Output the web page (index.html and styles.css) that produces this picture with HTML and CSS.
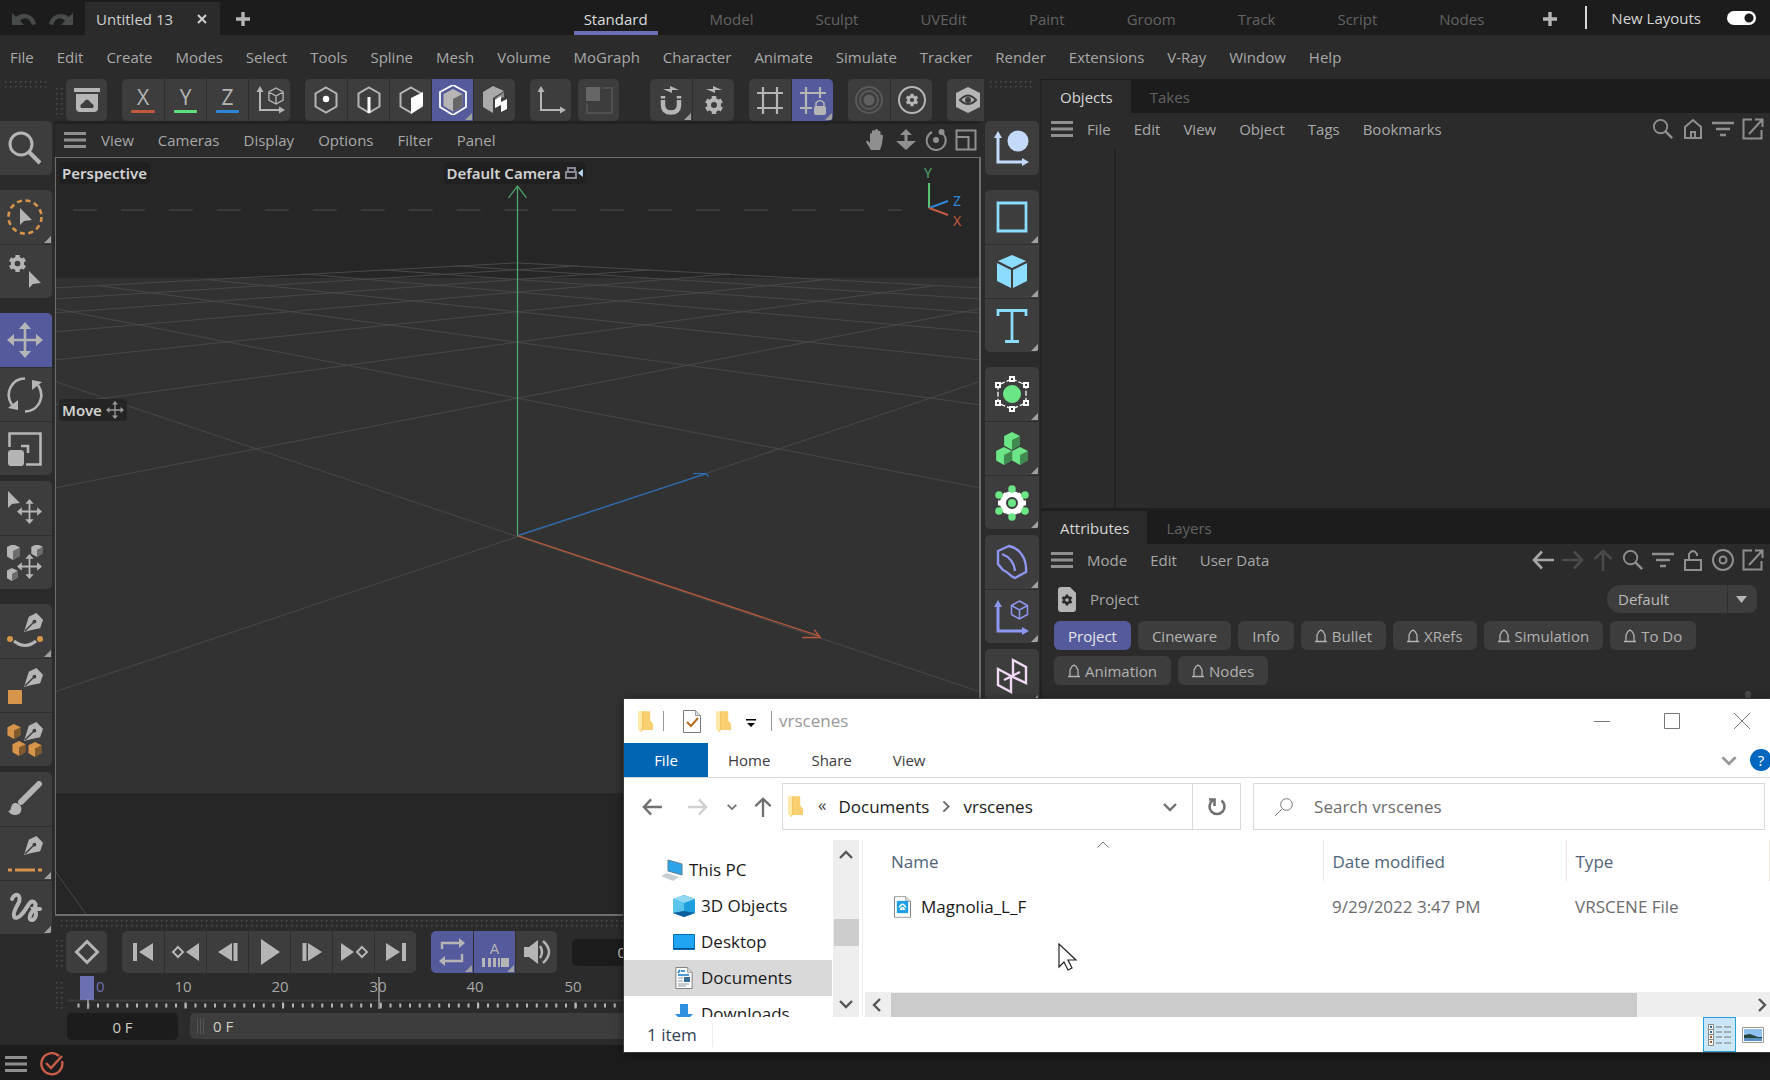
FILE: index.html
```html
<!DOCTYPE html>
<html lang="en">

<head>
    <meta charset="UTF-8">
    <meta name="viewport" content="width=device-width, initial-scale=1.0">
    <title>Untitled 13</title>
    <link rel="stylesheet" href="styles.css">
</head>

<body>
    <!-- icon sprite -->
    <svg class="sprite" aria-hidden="true">
        <symbol id="undo" viewBox="0 0 26 14"><path d="M1 1v12h12L9 9c4-5 10-3 12 4l4-1C23 2 12-1 5 5z" fill="currentColor" /></symbol>
        <symbol id="plus" viewBox="0 0 14 14"><path d="M7 0v14M0 7h14" stroke="currentColor" stroke-width="3.4" /></symbol>
        <symbol id="cross" viewBox="0 0 10 10"><path d="M1 1l8 8M9 1l-8 8" stroke="currentColor" stroke-width="2" /></symbol>
        <symbol id="burger" viewBox="0 0 22 16"><path d="M0 1.500h22M0 8h22M0 14.500h22" stroke="currentColor" stroke-width="3" /></symbol>
        <symbol id="search" viewBox="0 0 36 36"><g fill="none" stroke="currentColor"><circle cx="14" cy="14" r="11" stroke-width="3" /><path d="M22 22l11 11" stroke-width="4" /></g></symbol>
        <symbol id="cursor" viewBox="0 0 12 17"><path d="M0 0v17l4-4 8-1z" fill="currentColor" /></symbol>
        <symbol id="gear" viewBox="0 0 20 20"><circle cx="10" cy="10" r="5" fill="none" stroke="currentColor" stroke-width="4" /><path d="M10 1v3M10 16v3M2.200 5.500l2.600 1.500M15.200 13l2.600 1.500M2.200 14.500l2.600-1.500M15.200 7l2.600-1.500" stroke="currentColor" stroke-width="4.500" /></symbol>
        <symbol id="arrows" viewBox="0 0 36 36"><path d="M18 5v26M5 18h26" stroke="currentColor" stroke-width="2.600" /><path d="M18 0l6 7H12zM18 36l6-7H12zM0 18l7-6v12zM36 18l-7-6v12z" fill="currentColor" /></symbol>
        <symbol id="axes" viewBox="0 0 30 30"><path d="M5 5v20h20" fill="none" stroke="currentColor" stroke-width="2" /><path d="M5 1l3.500 6h-7zM30 25l-6-3.500v7z" fill="currentColor" /></symbol>
        <symbol id="wirecube" viewBox="0 0 18 20"><path d="M9 1l8 4.500v9L9 19l-8-4.500v-9zM1 5.500l8 4.500 8-4.500M9 10v9" fill="none" stroke="currentColor" stroke-width="1.500" /></symbol>
        <symbol id="hex" viewBox="0 0 24 28"><path d="M12 1.500l10.500 6v13L12 26.500l-10.500-6v-13z" fill="none" stroke="currentColor" stroke-width="2" /></symbol>
        <symbol id="pen" viewBox="0 0 20 20"><path d="M0 20L5 4l8-4 7 7-3 9-9 2z" fill="currentColor" /><path d="M1 19L10 10" stroke="#3d3d3d" stroke-width="1.500" /><circle cx="11" cy="9" r="2" fill="#3d3d3d" /></symbol>
        <symbol id="solidcube" viewBox="0 0 14 16"><path d="M7 0l7 3.500v8.500L7 16l-7-4V3.500z" fill="currentColor" /><path d="M7 7l7-3.500V12l-7 4z" fill="#000" opacity=".4" /></symbol>
        <symbol id="home" viewBox="0 0 20 22"><path d="M2 20V9l8-7 8 7v11zM8 20v-6h4v6" fill="none" stroke="currentColor" stroke-width="2" /></symbol>
        <symbol id="bell" viewBox="0 0 12 14"><path d="M2 12V6l2-3.500L6 1l2 1.500L10 6v6M0 12.500h12" fill="none" stroke="currentColor" stroke-width="1.300" /></symbol>
        <symbol id="filter" viewBox="0 0 22 18"><path d="M0 3h22M4 9h14M8 15h6" stroke="currentColor" stroke-width="2.600" /></symbol>
        <symbol id="open" viewBox="0 0 22 22"><path d="M10 1.500H1.500v19h18V12M13 1.500h7.500V9M20 2L7 16" fill="none" stroke="currentColor" stroke-width="2" /></symbol>
        <symbol id="arrow" viewBox="0 0 22 20"><path d="M22 10H2M10 1.500L2 10l8 8.500" fill="none" stroke="currentColor" stroke-width="2.600" /></symbol>
        <symbol id="chev" viewBox="0 0 14 10"><path d="M1 2l6 6 6-6" fill="none" stroke="currentColor" stroke-width="2.400" /></symbol>
        <symbol id="folder" viewBox="0 0 16 24"><path d="M0 1h6v20l-3 2-3-3z" fill="#ffe9a6" /><path d="M5 1h8v10l3 3v7H5z" fill="#f8d06f" /><path d="M5 1v19l-2 3" fill="none" stroke="#f0bf57" /></symbol>
        <symbol id="page" viewBox="0 0 18 23"><path d="M.500.500h12l5 5v17H.500z" fill="#fff" stroke="#7b7b7b" /><path d="M12.500.500v5h5" fill="#ddd" stroke="#9b9b9b" /></symbol>
    </svg>

    <header class="titlebar">
        <button class="hist" aria-label="Undo"><svg><use href="#undo" /></svg></button>
        <button class="hist redo" aria-label="Redo"><svg><use href="#undo" /></svg></button>
        <div class="doc-tab">
            <span>Untitled 13</span>
            <button aria-label="Close document"><svg width="10" height="10"><use href="#cross" /></svg></button>
        </div>
        <button class="add" aria-label="New document"><svg width="14" height="14"><use href="#plus" /></svg></button>
        <nav class="layouts">
            <button class="on">Standard</button>
            <button>Model</button>
            <button>Sculpt</button>
            <button>UVEdit</button>
            <button>Paint</button>
            <button>Groom</button>
            <button>Track</button>
            <button>Script</button>
            <button>Nodes</button>
        </nav>
        <button class="add-layout" aria-label="Add layout"><svg width="14" height="14"><use href="#plus" /></svg></button>
        <label class="switch" for="newLayouts">New Layouts <input type="checkbox" id="newLayouts" checked></label>
    </header>

    <nav class="menubar">
        <button>File</button>
        <button>Edit</button>
        <button>Create</button>
        <button>Modes</button>
        <button>Select</button>
        <button>Tools</button>
        <button>Spline</button>
        <button>Mesh</button>
        <button>Volume</button>
        <button>MoGraph</button>
        <button>Character</button>
        <button>Animate</button>
        <button>Simulate</button>
        <button>Tracker</button>
        <button>Render</button>
        <button>Extensions</button>
        <button>V-Ray</button>
        <button>Window</button>
        <button>Help</button>
    </nav>

    <main class="workspace">
        <!-- left tools -->
        <aside class="palette left">
            <div class="grip"></div>
            <div class="group">
                <button aria-label="Search"><svg><use href="#search" /></svg></button>
            </div>
            <div class="group space">
                <button class="more" aria-label="Live selection"><svg viewBox="0 0 36 36"><circle cx="18" cy="18" r="16.500" fill="none" stroke="#d6954a" stroke-width="2.600" stroke-dasharray="5 3.640" /><use href="#cursor" x="13" y="9" width="12" height="17" /></svg></button>
                <button aria-label="Selection settings"><svg viewBox="0 0 36 36"><use href="#gear" x="1" y="0" width="19" height="19" /><use href="#cursor" x="22" y="17" width="12" height="17" /></svg></button>
            </div>
            <div class="group space">
                <button class="on" aria-label="Move"><svg><use href="#arrows" /></svg></button>
                <button aria-label="Rotate"><svg viewBox="0 0 36 36"><path d="M18 1.500C5 1.500-3 16 5 28M18 34.500c13 0 21-14.500 13-26.500" fill="none" stroke="currentColor" stroke-width="2.600" /><path d="M1 31l10 2V23zM35 5L25 3v10z" fill="currentColor" /></svg></button>
                <button aria-label="Scale"><svg viewBox="0 0 36 36"><path d="M2.500 16V2.500h31v31H19M14 15h7v7" fill="none" stroke="currentColor" stroke-width="2.600" /><rect x="1" y="19" width="16" height="16" rx="3" fill="currentColor" /></svg></button>
            </div>
            <div class="group near">
                <button aria-label="Place"><svg viewBox="0 0 36 36"><use href="#cursor" x="1" y="1" width="12" height="17" /><use href="#arrows" x="10" y="9" width="25" height="25" /></svg></button>
                <button aria-label="Scatter"><svg viewBox="0 0 36 36"><use href="#solidcube" x="-1" y="-1" width="14" height="16" /><use href="#solidcube" x="24" y="-1" width="12" height="13" /><use href="#solidcube" x="-1" y="23" width="12" height="13" /><use href="#arrows" x="10" y="9" width="25" height="25" /></svg></button>
            </div>
            <div class="group space">
                <button class="more" aria-label="Spline pen"><svg viewBox="0 0 36 36"><use href="#pen" x="17" y="0" width="19" height="19" /><path d="M7 28q11 9 22 0" fill="none" stroke="currentColor" stroke-width="3" /><circle cx="3" cy="26" r="3" fill="#d6954a" /><circle cx="33" cy="26" r="3" fill="#d6954a" /></svg></button>
                <button aria-label="Polygon pen"><svg viewBox="0 0 36 36"><use href="#pen" x="17" y="0" width="19" height="19" /><path d="M1 22h14v14H1z" fill="#d6954a" /></svg></button>
                <button aria-label="Volume pen"><svg viewBox="0 0 36 36"><use href="#pen" x="17" y="0" width="19" height="19" /><g color="#d6954a"><use href="#solidcube" x="0" y="2" width="14" height="15" /><use href="#solidcube" x="5" y="19" width="14" height="15" /><use href="#solidcube" x="21" y="20" width="14" height="15" /></g></svg></button>
            </div>
            <div class="group near">
                <button aria-label="Brush"><svg viewBox="0 0 36 36"><path d="M14 21L32 3" stroke="currentColor" stroke-width="6" stroke-linecap="round" /><path d="M1 30c5 0 1-8 8-8 6 1 7 8 3 11-4 2-8 1-11-3z" fill="currentColor" /></svg></button>
                <button class="more" aria-label="Line cut"><svg viewBox="0 0 36 36"><use href="#pen" x="17" y="0" width="19" height="19" /><path d="M1 34h4M8 34h20M31 34h4" stroke="#d6954a" stroke-width="3" /></svg></button>
                <button class="more" aria-label="Sketch"><svg viewBox="0 0 36 36"><path d="M5 9c3-8 11-4 6 5-8 14-3 16 2 12C21 19 22 9 27 12c6 5-7 11-4 17 3 4 9-4 4-10h6" fill="none" stroke="currentColor" stroke-width="4" stroke-linecap="round" /></svg></button>
            </div>
        </aside>

        <section class="center">
            <!-- top toolbar -->
            <div class="toolbar">
                <div class="vgrip"></div>
                <div class="group"><button aria-label="Asset browser"><svg viewBox="0 0 30 30"><path d="M2 3h26v4H2zM4 9h22v14q0 4-4 4H8q-4 0-4-4z" fill="currentColor" /><path d="M9 23h12q2-3-2-5-4-7-8 0-4 2-2 5z" fill="#3d3d3d" /></svg></button></div>
                <div class="group">
                    <button class="axis x">X</button>
                    <button class="axis y">Y</button>
                    <button class="axis z">Z</button>
                    <button aria-label="Coordinate system"><svg viewBox="0 0 30 30"><use href="#axes" width="30" height="30" /><use href="#wirecube" x="13" y="2" width="16" height="18" /></svg></button>
                </div>
                <div class="group">
                    <button aria-label="Points"><svg viewBox="0 0 30 30"><use href="#hex" x="3" y="1" width="24" height="28" /><circle cx="15" cy="14" r="3.200" fill="#fff" /></svg></button>
                    <button aria-label="Edges"><svg viewBox="0 0 30 30"><use href="#hex" x="3" y="1" width="24" height="28" /><path d="M15 12v16" stroke="#fff" stroke-width="3" /></svg></button>
                    <button aria-label="Polygons"><svg viewBox="0 0 30 30"><use href="#hex" x="3" y="1" width="24" height="28" /><path d="M15 13l12-6v14l-12 8z" fill="#fff" /></svg></button>
                    <button class="on more" aria-label="Model mode"><svg viewBox="0 0 30 30"><path d="M15 0l13 7v15l-13 8-13-8V7z" fill="none" stroke="#fff" stroke-width="1.800" /><path d="M15 4l9.500 5v12L15 26.500 5.500 21V9z" fill="#b5b5b5" /><path d="M15 14l9.500-5v12L15 26.500z" fill="#666" /></svg></button>
                    <button aria-label="Texture mode"><svg viewBox="0 0 30 30"><path d="M13 1l11 5-11 7v15L3 22V7z" fill="#aaa" /><path d="M15 13l9-6v5l-9 5z" fill="#888" /><path d="M15 15l6-4v6l6-3v10l-6 3v-7l-6 3z" fill="#fff" /></svg></button>
                </div>
                <div class="group"><button aria-label="Axis"><svg><use href="#axes" /></svg></button></div>
                <div class="group near"><button aria-label="Solo"><svg viewBox="0 0 30 30"><path d="M2 2h14v14H2z" fill="#666" /><path d="M19 3h9v25H3v-9" fill="none" stroke="#505050" stroke-width="2" /></svg></button></div>
                <div class="group wide">
                    <button class="more" aria-label="Snap"><svg viewBox="0 0 30 30"><path d="M7 4h7V1l9 4h-7v3z" fill="currentColor" /><path d="M7 15v5q0 7.500 8 7.500t8-7.500v-5" fill="none" stroke="currentColor" stroke-width="4.500" /><path d="M4.700 11h4.600v2.500H4.700zM20.700 11h4.600v2.500h-4.600z" fill="currentColor" /></svg></button>
                    <button aria-label="Snap settings"><svg viewBox="0 0 30 30"><path d="M7 4h7V1l9 4h-7v3z" fill="currentColor" /><use href="#gear" x="5" y="10" width="20" height="20" /></svg></button>
                </div>
                <div class="group">
                    <button aria-label="Workplane"><svg viewBox="0 0 30 30"><path d="M8 2v27M22 2v27M2 8h26M2 23h26" stroke="currentColor" stroke-width="2.200" /></svg></button>
                    <button class="on more" aria-label="Lock workplane"><svg viewBox="0 0 30 30"><path d="M8 2v27M22 2v11M2 8h26M2 23h12" stroke="currentColor" stroke-width="2.200" /><rect x="16" y="21" width="12" height="9" rx="2" fill="currentColor" /><path d="M18 21v-3q4-5 8 0v3" fill="none" stroke="currentColor" stroke-width="1.500" /></svg></button>
                </div>
                <div class="group">
                    <button aria-label="Soft selection"><svg viewBox="0 0 30 30"><g fill="none" stroke="#5a5a5a" stroke-width="1.800"><circle cx="15" cy="15" r="13" /><circle cx="15" cy="15" r="9" /></g><circle cx="15" cy="15" r="5.500" fill="#606060" /></svg></button>
                    <button aria-label="Soft selection settings"><svg viewBox="0 0 30 30"><circle cx="15" cy="15" r="13" fill="none" stroke="currentColor" stroke-width="2" /><use href="#gear" x="8" y="8" width="14" height="14" /></svg></button>
                </div>
                <div class="group"><button aria-label="Viewport render"><svg viewBox="0 0 30 30"><path d="M15 2l12 6v14l-12 6-12-6V8z" fill="currentColor" /><path d="M7 15q8-9 16 0-8 8-16 0z" fill="none" stroke="#3d3d3d" stroke-width="2" /><circle cx="15" cy="15" r="3" fill="#3d3d3d" /></svg></button></div>
            </div>

            <div class="view-head">
                <svg class="burger"><use href="#burger" /></svg>
                <button>View</button>
                <button>Cameras</button>
                <button>Display</button>
                <button>Options</button>
                <button>Filter</button>
                <button>Panel</button>
                <div class="view-nav">
                    <svg viewBox="0 0 22 22"><path d="M6 21l-5-8q0-2 2-1l2 2V5q1-2 2 0V2q1.500-2 3 0V1q1.500-2 3 0v1q2-1 2.500 1v3q2-1.500 2.500 1l-1 8-2 6z" fill="currentColor" /></svg>
                    <svg viewBox="0 0 22 22"><path d="M11 0l6 6h-4.500v6H21l-10 9-10-9h8.500V6H5z" fill="currentColor" /></svg>
                    <svg viewBox="0 0 22 22"><path d="M7 3a9.500 9.500 0 1 0 10 1" fill="none" stroke="currentColor" stroke-width="2" /><circle cx="16.500" cy="3" r="3" fill="currentColor" /><circle cx="11" cy="11" r="3" fill="currentColor" /></svg>
                    <svg viewBox="0 0 22 22"><path d="M1.500 1.500h19v19h-19zM1.500 8h12v12" fill="none" stroke="currentColor" stroke-width="2" /></svg>
                </div>
            </div>

            <div class="viewport">
                <svg class="scene" viewBox="56 158 924 757" preserveAspectRatio="xMidYMin slice">
                    <path d="M56 278h924v516H56z" fill="#323232" />
                    <path d="M73 210h830" stroke="#3a3a3a" stroke-width="2" stroke-dasharray="24 24" />
                    <g fill="none" stroke="#484848">
                        <path d="M56 382L980 692M56 309L980 488M100 286L980 405M210 280L980 360M303 274L980 332M384 270L980 313M455 266L980 299M517 263L980 288" />
                        <path d="M980 382L56 692M980 309L56 488M934 286L56 405M824 280L56 360M731 274L56 332M650 270L56 313M579 266L56 299M517 263L56 288" />
                        <path d="M56 873l30 42" />
                    </g>
                    <path d="M518 536V186M509 198l9-12 9 12" fill="none" stroke="#4fa56a" stroke-width="1.300" />
                    <path d="M518 536l189-62M694 474l13 0 2 3" fill="none" stroke="#2c6db5" stroke-width="1.300" />
                    <path d="M518 536l303 101M803 638h18l-6-8" fill="none" stroke="#b8583f" stroke-width="1.300" />
                    <g fill="none" stroke-width="2"><path d="M930 208v-25" stroke="#5cc878" /><path d="M930 208l19-7" stroke="#2f86d8" /><path d="M930 208l19 7" stroke="#c25a40" /></g>
                    <g class="gizmo"><text x="925" y="178" fill="#4fa56a">Y</text><text x="954" y="206" fill="#2f86d8">Z</text><text x="954" y="226" fill="#c25a40">X</text></g>
                </svg>
                <span class="hud persp">Perspective</span>
                <span class="hud cam">Default Camera <svg width="18" height="14" viewBox="0 0 18 14"><path d="M1 6h10v6H1zM3 6V2h7v4" fill="none" stroke="#8a8a96" stroke-width="2" /><path d="M18 3v8l-5-4z" fill="#b7d4ea" /></svg></span>
                <span class="hud tool">Move <svg width="18" height="18"><use href="#arrows" /></svg></span>
            </div>

            <!-- timeline -->
            <div class="timeline">
                <div class="tgrip"></div>
                <div class="play">
                    <div class="vgrip"></div>
                    <div class="group"><button aria-label="Record key"><svg viewBox="0 0 30 30"><path d="M15 4.500L25.500 15 15 25.500 4.500 15z" fill="none" stroke="currentColor" stroke-width="3" /></svg></button></div>
                    <div class="group">
                        <button aria-label="Go to start"><svg viewBox="0 0 30 30"><path d="M5 6h4v18H5zM25 6v18L11 15z" fill="currentColor" /></svg></button>
                        <button aria-label="Previous key"><svg viewBox="0 0 30 30"><path d="M7 10l5 5-5 5-5-5z" fill="none" stroke="currentColor" stroke-width="2" /><path d="M28 6v18L15 15z" fill="currentColor" /></svg></button>
                        <button aria-label="Previous frame"><svg viewBox="0 0 30 30"><path d="M19 6v18L5 15zM20.500 6h4v18h-4z" fill="currentColor" /></svg></button>
                        <button aria-label="Play"><svg viewBox="0 0 30 30"><path d="M6 2l19 13L6 28z" fill="currentColor" /></svg></button>
                        <button aria-label="Next frame"><svg viewBox="0 0 30 30"><path d="M11 6v18l14-9zM5.500 6h4v18h-4z" fill="currentColor" /></svg></button>
                        <button aria-label="Next key"><svg viewBox="0 0 30 30"><path d="M23 10l5 5-5 5-5-5z" fill="none" stroke="currentColor" stroke-width="2" /><path d="M2 6v18l13-9z" fill="currentColor" /></svg></button>
                        <button aria-label="Go to end"><svg viewBox="0 0 30 30"><path d="M21 6h4v18h-4zM5 6v18l14-9z" fill="currentColor" /></svg></button>
                    </div>
                    <div class="group">
                        <button class="on more" aria-label="Loop"><svg viewBox="0 0 30 30"><path d="M5 12V6h18M25 17v7H7" fill="none" stroke="currentColor" stroke-width="2.400" /><path d="M22 1l6 5-6 5zM8 19l-6 5 6 5z" fill="currentColor" /></svg></button>
                        <button class="on more autokey"><span>A</span><svg viewBox="0 0 30 9"><path d="M2 0h3v9H2zM8 0h3v9H8zM13 0h3v9h-3zM18 0h2v9h-2zM21 0h8v9h-8z" fill="currentColor" /></svg></button>
                        <button aria-label="Sound"><svg viewBox="0 0 30 30"><path d="M2 10h5l9-7v24l-9-7H2z" fill="currentColor" /><path d="M18 9q4 6 0 12M21 4q12 11 0 22" fill="none" stroke="currentColor" stroke-width="2.500" /></svg></button>
                    </div>
                    <input class="frame" type="text" value="0 F" aria-label="Current frame">
                </div>
                <div class="ruler-row">
                    <div class="vgrip"></div>
                    <svg class="ruler">
                        <path d="M2 27.500h1000" stroke="#3d3d3d" stroke-width="2" />
                        <path d="M11.500 32.500h1000" stroke="#b5b5b5" stroke-width="4" stroke-dasharray="2 7.750" />
                        <path d="M21 32.500h1000" stroke="#b5b5b5" stroke-width="6" stroke-dasharray="2 95.500" />
                        <path d="M14 3h14v24H14z" fill="#6c70b2" />
                        <path d="M22 26v10M313 4v32" stroke="#9a9a9a" stroke-width="1.500" />
                        <g>
                            <text x="30" y="19" class="now">0</text>
                            <text x="117" y="19" text-anchor="middle">10</text>
                            <text x="214" y="19" text-anchor="middle">20</text>
                            <text x="312" y="19" text-anchor="middle">30</text>
                            <text x="409" y="19" text-anchor="middle">40</text>
                            <text x="507" y="19" text-anchor="middle">50</text>
                        </g>
                    </svg>
                </div>
                <div class="range">
                    <input class="frame" type="text" value="0 F" aria-label="Start frame">
                    <div class="range-bar"><i></i>0 F</div>
                </div>
            </div>
        </section>

        <!-- object palette -->
        <aside class="palette right">
            <div class="grip"></div>
            <div class="group">
                <button aria-label="Null"><svg viewBox="0 0 36 36" color="#c4dafa"><path d="M4 8v24h24" fill="none" stroke="currentColor" stroke-width="3" /><path d="M4 1l4 7H0zM35 32l-7-4v8z" fill="currentColor" /><circle cx="24" cy="11" r="10.500" fill="currentColor" /></svg></button>
            </div>
            <div class="group space">
                <button class="more" aria-label="Rectangle"><svg viewBox="0 0 36 36"><path d="M4 4h28v28H4z" fill="none" stroke="#8cdcff" stroke-width="2.800" /></svg></button>
                <button class="more" aria-label="Cube"><svg viewBox="0 0 36 36" fill="#8cdcff"><path d="M18 1l14 6-14 7L4 7zM3 9l14 7v18L3 27zM33 9l-14 7v18l14-7z" /></svg></button>
                <button class="more" aria-label="Text"><svg viewBox="0 0 36 36"><path d="M4 8V2.500h28V8M18 3v30M11 33.500h14" fill="none" stroke="#8cdcff" stroke-width="2.800" /></svg></button>
            </div>
            <div class="group space">
                <button class="more" aria-label="Subdivision surface"><svg viewBox="0 0 36 36"><circle cx="18" cy="18" r="9" fill="#6be585" /><path d="M18 3l14 6v18l-14 6-14-6V9z" fill="none" stroke="#fff" stroke-width="1.300" stroke-dasharray="5 2" /><g fill="#3d3d3d" stroke="#fff" stroke-width="2"><path d="M16 1h4v4h-4zM16 31h4v4h-4zM2 7h4v4H2zM30 7h4v4h-4zM2 25h4v4H2zM30 25h4v4h-4z" /></g></svg></button>
                <button class="more" aria-label="Cloner"><svg viewBox="0 0 36 36" color="#6be585"><use href="#solidcube" x="10" y="1" width="16" height="18" /><use href="#solidcube" x="2" y="16" width="16" height="18" /><use href="#solidcube" x="18" y="16" width="16" height="18" /></svg></button>
                <button class="more" aria-label="Effector"><svg viewBox="0 0 36 36"><g fill="none" stroke="#fff"><circle cx="18" cy="18" r="9" stroke-width="6" /><path d="M9 9l3 3M27 9l-3 3M9 27l3-3M27 27l-3-3M4 18h4M32 18h-4" stroke-width="5" /></g><g fill="#6be585"><circle cx="18" cy="18" r="4" /><circle cx="18" cy="4" r="3.800" /><circle cx="18" cy="32" r="3.800" /><circle cx="5" cy="10" r="3.800" /><circle cx="31" cy="10" r="3.800" /><circle cx="5" cy="26" r="3.800" /><circle cx="31" cy="26" r="3.800" /></g></svg></button>
            </div>
            <div class="group near">
                <button class="more" aria-label="Bend"><svg viewBox="0 0 36 36" fill="none" stroke="#8e97f0" stroke-width="2.400"><path d="M4 7l11-5c11 2 18 13 17 26l-11 6c-4-1-5-5-12-8l-5-6z" /><path d="M8 10c8 3 12 8 13 17" /></svg></button>
                <button class="more" aria-label="Field"><svg viewBox="0 0 36 36" color="#8e97f0"><path d="M4 8v24h24" fill="none" stroke="currentColor" stroke-width="3" /><path d="M4 1l4 7H0zM35 32l-7-4v8z" fill="currentColor" /><use href="#wirecube" x="16" y="1" width="19" height="20" /></svg></button>
            </div>
            <div class="group near">
                <button class="more" aria-label="Symmetry"><svg viewBox="0 0 36 36" fill="none" stroke="#f0d8f4" stroke-width="2.400"><path d="M4 11l13 7v16L4 27zM19 2l13 7v16l-13-6zM10 22l16-8" /></svg></button>
            </div>
        </aside>

        <section class="panels">
            <div class="panel objects">
                <div class="tabs">
                    <button class="on">Objects</button>
                    <button>Takes</button>
                </div>
                <div class="panel-menu">
                    <svg class="burger"><use href="#burger" /></svg>
                    <button>File</button>
                    <button>Edit</button>
                    <button>View</button>
                    <button>Object</button>
                    <button>Tags</button>
                    <button>Bookmarks</button>
                    <div class="panel-icons">
                        <svg><use href="#search" /></svg>
                        <svg><use href="#home" /></svg>
                        <svg><use href="#filter" /></svg>
                        <svg><use href="#open" /></svg>
                    </div>
                </div>
                <div class="tree"></div>
            </div>

            <div class="panel attributes">
                <div class="tabs">
                    <button class="on">Attributes</button>
                    <button>Layers</button>
                </div>
                <div class="panel-menu">
                    <svg class="burger"><use href="#burger" /></svg>
                    <button>Mode</button>
                    <button>Edit</button>
                    <button>User Data</button>
                    <div class="panel-icons">
                        <svg class="lit"><use href="#arrow" /></svg>
                        <svg class="dim flip"><use href="#arrow" /></svg>
                        <svg class="dim up"><use href="#arrow" /></svg>
                        <svg><use href="#search" /></svg>
                        <svg><use href="#filter" /></svg>
                        <svg viewBox="0 0 22 22"><path d="M3 11h16v10H3zM7 11V5q4-6 8 0v2" fill="none" stroke="currentColor" stroke-width="2" /></svg>
                        <svg viewBox="0 0 22 22"><g fill="none" stroke="currentColor" stroke-width="2"><circle cx="11" cy="11" r="10" /><circle cx="11" cy="11" r="3.500" /></g></svg>
                        <svg><use href="#open" /></svg>
                    </div>
                </div>
                <div class="project">
                    <svg width="18" height="25" viewBox="0 0 18 25"><path d="M3 0h9l6 6v16q0 3-3 3H3q-3 0-3-3V3q0-3 3-3z" fill="#b5b5b5" /><g color="#2b2b2b"><use href="#gear" x="3" y="7" width="12" height="12" /></g></svg>
                    <label for="preset">Project</label>
                    <div class="drop">
                        <select id="preset">
                            <option>Default</option>
                        </select>
                    </div>
                </div>
                <div class="chips">
                    <button class="on">Project</button>
                    <button>Cineware</button>
                    <button>Info</button>
                    <button><svg><use href="#bell" /></svg>Bullet</button>
                    <button><svg><use href="#bell" /></svg>XRefs</button>
                    <button><svg><use href="#bell" /></svg>Simulation</button>
                    <button><svg><use href="#bell" /></svg>To Do</button>
                    <button><svg><use href="#bell" /></svg>Animation</button>
                    <button><svg><use href="#bell" /></svg>Nodes</button>
                </div>
                <div class="thumb"></div>
            </div>
        </section>
    </main>

    <footer class="statusbar">
        <svg class="burger"><use href="#burger" /></svg>
        <svg width="24" height="24" viewBox="0 0 24 24"><path d="M19 4a10.500 10.500 0 1 0 3 5M6 11l5 5L22 4" fill="none" stroke="#c85f48" stroke-width="2.400" /></svg>
    </footer>

    <!-- file explorer window -->
    <section class="explorer">
        <div class="ex-title">
            <svg class="folder"><use href="#folder" /></svg>
            <i></i>
            <svg class="check" viewBox="0 0 18 23"><use href="#page" width="18" height="23" /><path d="M4 12l4 4 7-8" fill="none" stroke="#b86a1c" stroke-width="2" /></svg>
            <svg class="folder"><use href="#folder" /></svg>
            <svg class="qa" viewBox="0 0 10 8"><path d="M0 0h10v1.500H0zM1 4h8L5 8z" /></svg>
            <i></i>
            <span>vrscenes</span>
            <div class="win-btns">
                <button aria-label="Minimize"><svg viewBox="0 0 16 16"><path d="M0 8.500h16" stroke="#777" /></svg></button>
                <button aria-label="Maximize"><svg viewBox="0 0 16 16"><path d="M.500.500h15v15H.500z" fill="none" stroke="#777" /></svg></button>
                <button aria-label="Close"><svg viewBox="0 0 16 16"><path d="M0 0l16 16M16 0L0 16" stroke="#777" /></svg></button>
            </div>
        </div>
        <div class="ribbon">
            <button class="file">File</button>
            <button>Home</button>
            <button>Share</button>
            <button>View</button>
            <svg class="expand"><use href="#chev" /></svg>
            <button class="help" aria-label="Help">?</button>
        </div>
        <div class="ex-nav">
            <button aria-label="Back"><svg class="arr"><use href="#arrow" /></svg></button>
            <button class="off" aria-label="Forward"><svg class="arr flip"><use href="#arrow" /></svg></button>
            <button class="recent" aria-label="Recent locations"><svg width="10" height="8"><use href="#chev" /></svg></button>
            <button aria-label="Up"><svg class="arr up"><use href="#arrow" /></svg></button>
            <div class="address">
                <svg class="folder"><use href="#folder" /></svg>
                <span class="laquo">«</span>
                <a href="#">Documents</a>
                <svg class="sep"><use href="#chev" /></svg>
                <a href="#">vrscenes</a>
                <svg class="drop-ico"><use href="#chev" /></svg>
                <button aria-label="Refresh"><svg width="20" height="20" viewBox="0 0 20 20"><path d="M14.500 3.500a7.500 7.500 0 1 1-9 0M2 2.500h5.500V9" fill="none" stroke="#707070" stroke-width="2.600" /></svg></button>
            </div>
            <div class="find">
                <svg viewBox="0 0 18 18"><circle cx="11.500" cy="6.500" r="5.800" fill="none" stroke="#777" /><path d="M7.500 10.500L0 18" stroke="#777" /></svg>
                <input type="text" placeholder="Search vrscenes" aria-label="Search vrscenes">
            </div>
        </div>
        <div class="ex-body">
            <ul class="places">
                <li class="root"><svg viewBox="0 0 22 22"><path d="M7 1l14 4v11L7 12z" fill="#2da3ea" stroke="#5b7f96" /><path d="M0 17l6-3 12 4-6 4z" fill="#c9ced3" /></svg>This PC</li>
                <li><svg viewBox="0 0 22 22"><path d="M0 4l11-4 11 4v14l-11 4-11-4z" fill="#1e9fdd" /><path d="M0 4l11-4 11 4-11 4z" fill="#8fd9f2" /><path d="M0 4l11 4v8L0 18z" fill="#5cc5ee" /><path d="M0 18l11-2 11 2-11 4z" fill="#0c5f9e" /></svg>3D Objects</li>
                <li><svg viewBox="0 0 22 22"><path d="M.500 3.500h21v15H.500z" fill="#1fa5f2" stroke="#0b6cb8" /><path d="M1 17.500h20" stroke="#0b4f8a" /></svg>Desktop</li>
                <li class="on"><svg viewBox="0 0 22 22"><use href="#page" x="2" y="0" width="18" height="22" /><path d="M5 6l2-3M8 4h4M5 8h11" stroke="#1679c8" stroke-width="1.500" /><path d="M5 11h5M5 14h5M5 17h11M5 19h8" stroke="#8c9aa5" /><path d="M11 10h6v5h-6z" fill="#3c6e9c" /></svg>Documents</li>
                <li><svg viewBox="0 0 22 22"><path d="M7 1h8v10h5l-9 9-9-9h5z" fill="#2f8fe0" /></svg>Downloads</li>
            </ul>
            <div class="vscroll">
                <svg class="rot"><use href="#chev" /></svg>
                <span></span>
                <svg><use href="#chev" /></svg>
            </div>
            <div class="files">
                <table>
                    <thead>
                        <tr>
                            <th class="c-name">Name<svg viewBox="0 0 12 7"><path d="M.500 6.500L6 1l5.500 5.500" fill="none" stroke="#777" /></svg></th>
                            <th class="c-date">Date modified</th>
                            <th>Type</th>
                        </tr>
                    </thead>
                    <tbody>
                        <tr>
                            <td class="name"><svg viewBox="0 0 18 23"><use href="#page" width="18" height="23" /><path d="M3 5h12v13H3z" fill="#1fa0ea" /><path d="M5.500 12q3.500-7 7 0M7 14q2-4 4 0z" fill="none" stroke="#fff" stroke-width="1.500" /></svg>Magnolia_L_F</td>
                            <td>9/29/2022 3:47 PM</td>
                            <td>VRSCENE File</td>
                        </tr>
                    </tbody>
                </table>
                <div class="hscroll">
                    <svg class="l"><use href="#chev" /></svg>
                    <span></span>
                    <svg class="r"><use href="#chev" /></svg>
                </div>
            </div>
        </div>
        <div class="ex-status">
            <span>1 item</span>
            <button class="details" aria-label="Details view"><svg width="24" height="22" viewBox="0 0 24 22"><path d="M.500.500h5v5h-5zM.500 5.500h5v5h-5zM.500 10.500h5v5h-5zM.500 15.500h5v6h-5z" fill="#fff" stroke="#888" /><path d="M8 3h6M16 3h7M8 8h6M16 8h7M8 13h6M16 13h7M8 19h6M16 19h7" stroke="#777" /><path d="M2 2h2v2H2zM2 7h2v2H2z" fill="#2c6ca0" /><path d="M2 12h2v2H2zM2 17h2v2H2z" fill="#b0562c" /></svg></button>
            <button class="thumbs" aria-label="Thumbnail view"><svg width="22" height="16" viewBox="0 0 22 16"><path d="M.500.500h21v15H.500z" fill="#fff" stroke="#999" /><path d="M2 2h18v12H2z" fill="#8fc0f0" /><path d="M2 8l6-1 8 3h4v1H2z" fill="#27443e" /><path d="M2 11h18v3H2z" fill="#5a8fc4" /></svg></button>
        </div>
    </section>

    <svg class="pointer" viewBox="0 0 19 28"><path d="M1 1v23l5-5 4 8 4-2-4-8h8z" fill="#fff" stroke="#222" stroke-width="1.200" /></svg>
</body>

</html>
```

FILE: styles.css
```css
* {
    box-sizing: border-box;
}

body {
    margin: 0;
    height: 100vh;
    display: flex;
    flex-direction: column;
    overflow: hidden;
    position: relative;
    background-color: #2b2b2b;
    color: #a8a8a8;
    font-family: "Open Sans", "Noto Sans", sans-serif;
    font-size: 15px;
    line-height: 20px;
}

button,
input,
select {
    font: inherit;
    color: inherit;
    background: none;
    border: 0;
    padding: 0;
    margin: 0;
}

svg {
    display: block;
    flex: none;
}

.sprite {
    position: absolute;
    width: 0;
    height: 0;
}

.burger {
    width: 22px;
    height: 16px;
    color: #8f8f8f;
}

/* title bar */
.titlebar {
    flex: none;
    height: 35px;
    display: flex;
    align-items: center;
    background-color: #1c1c1c;
    padding: 2px 14px 0 11px;
}

.hist svg {
    width: 26px;
    height: 14px;
    color: #474b49;
    margin-right: 11px;
}

.redo svg {
    transform: scaleX(-1);
}

.doc-tab {
    align-self: flex-end;
    height: 33px;
    width: 135px;
    display: flex;
    align-items: center;
    justify-content: space-between;
    padding: 0 13px 0 11px;
    background-color: #2b2b2b;
    color: #d0d0d0;
}

.add {
    margin-left: 16px;
    color: #b5b5b5;
}

.layouts {
    margin-left: auto;
    display: flex;
    gap: 42px;
    align-self: stretch;
}

.layouts button {
    padding: 0 10px;
    border-bottom: 4px solid transparent;
    border-top: 4px solid transparent;
    color: #636363;
}

.layouts .on {
    color: #dcdcdc;
    border-bottom-color: #6c6fb4;
}

.add-layout {
    margin: 0 28px 0 49px;
    color: #b5b5b5;
}

.switch {
    display: flex;
    align-items: center;
    gap: 26px;
    height: 23px;
    margin-bottom: 2px;
    padding-left: 24px;
    border-left: 2px solid #d8d8d8;
    color: #d6d6d6;
}

.switch input {
    appearance: none;
    width: 29px;
    height: 14px;
    border-radius: 7px;
    background: radial-gradient(circle at 22px 7px, #1c1c1c 4px, #fff 5px);
}

.menubar {
    flex: none;
    height: 44px;
    display: flex;
    align-items: center;
    gap: 23px;
    padding: 0 10px;
}

/* workspace */
.workspace {
    flex: 1;
    min-height: 0;
    display: grid;
    grid-template-columns: 54px minmax(0, 930fr) 56px minmax(0, 730fr);
    grid-template-rows: minmax(0, 1fr);
}

.grip,
.tgrip,
.vgrip {
    background-image: radial-gradient(#444 1px, transparent 1px);
    background-size: 5px 5px;
}

.palette {
    display: flex;
    flex-direction: column;
    overflow: hidden;
}

.palette .grip {
    flex: none;
    height: 10px;
    margin: 0 6px 32px 3px;
}

.group {
    flex: none;
    display: flex;
    background-color: #3d3d3d;
    border-radius: 5px;
    overflow: hidden;
    color: #b5b5b5;
}

.group button {
    position: relative;
    display: flex;
    align-items: center;
    justify-content: center;
}

.group .on {
    background-color: #555a9c;
}

/* small corner mark on buttons which hold a sub menu */
.more::after {
    content: "";
    position: absolute;
    right: 1px;
    bottom: 1px;
    width: 7px;
    height: 7px;
    background-color: #a0a0a0;
    clip-path: polygon(100% 0, 100% 100%, 0 100%);
}

.palette .group {
    flex-direction: column;
}

.palette .group.space {
    margin-top: 15px;
}

.palette .group.near {
    margin-top: 6px;
}

.palette button {
    height: 54px;
}

.palette button + button {
    border-top: 1px solid #2f2f2f;
}

.palette svg {
    width: 36px;
    height: 36px;
}

.left {
    padding-right: 2px;
}

.left button {
    padding-right: 2px;
}

.left .group {
    border-radius: 0 5px 5px 0;
}

.right {
    padding: 0 1px;
}

/* center column */
.center {
    display: flex;
    flex-direction: column;
    min-width: 0;
}

.toolbar {
    flex: none;
    height: 42px;
    display: flex;
    overflow: hidden;
}

.vgrip {
    flex: none;
    width: 10px;
    margin: 7px 2px 5px 0;
}

.toolbar .group,
.play .group {
    height: 42px;
    margin-right: 15px;
}

.toolbar .group.near {
    margin-left: -8px;
}

.toolbar .group.wide {
    margin-left: 16px;
}

.toolbar button,
.play button {
    width: 42px;
}

.toolbar button:only-child,
.play button:only-child {
    width: 41px;
}

.toolbar button + button,
.play button + button {
    border-left: 1px solid #2f2f2f;
}

.toolbar .group svg,
.play .group svg {
    width: 30px;
    height: 30px;
}

.toolbar .axis {
    flex-direction: column;
    justify-content: flex-start;
    padding-top: 8px;
    font-size: 21px;
}

.axis::before {
    content: "";
    position: absolute;
    left: 9px;
    right: 9px;
    bottom: 8px;
    height: 3px;
    border-radius: 1px;
}

.x::before {
    background-color: #c2583c;
}

.y::before {
    background-color: #5ee07c;
}

.z::before {
    background-color: #2f86d8;
}

.view-head {
    flex: none;
    height: 36px;
    display: flex;
    align-items: center;
    gap: 24px;
    margin-right: 4px;
    padding: 0 3px 2px 9px;
    border-top: 3px solid #222;
    border-left: 1px solid #222;
}

.view-head .burger {
    margin-right: -9px;
}

.view-nav {
    margin-left: auto;
    display: flex;
    gap: 8px;
    color: #8f8f8f;
}

.view-nav svg {
    width: 22px;
    height: 22px;
}

.viewport {
    flex: 1;
    min-height: 0;
    position: relative;
    margin: 0 3px 0 1px;
    border: 1px solid #6e6e6e;
    border-width: 1px 2px 2px 1px;
    background-color: #262626;
}

.scene {
    width: 100%;
    height: 100%;
}

.gizmo {
    font: 14px "Noto Sans", sans-serif;
}

.hud {
    position: absolute;
    display: flex;
    align-items: center;
    gap: 4px;
    padding: 0 3px;
    height: 22px;
    border-radius: 4px;
    background-color: rgba(30, 30, 30, 0.7);
    color: #d2d2d2;
    font-family: "Noto Sans", sans-serif;
    font-weight: 600;
}

.persp {
    left: 3px;
    top: 4px;
}

.cam {
    left: 50%;
    top: 4px;
    transform: translateX(-52%);
}

.tool {
    left: 3px;
    top: 241px;
}

.tool svg {
    color: #999;
}

/* timeline */
.timeline {
    flex: none;
    padding-bottom: 5px;
}

.tgrip {
    height: 10px;
    margin: 2px 0 3px 5px;
}

.play,
.ruler-row,
.range {
    display: flex;
    overflow: hidden;
}

.play {
    align-items: center;
}

.play .vgrip {
    height: 30px;
}

.play .autokey {
    flex-direction: column;
}

.play .autokey svg {
    height: 9px;
}

.ruler-row .vgrip {
    height: 30px;
    margin-bottom: 0;
}

.frame {
    width: 111px;
    height: 27px;
    border-radius: 5px;
    background-color: #1c1c1c;
    color: #d0cdc4;
    text-align: center;
}

.ruler {
    flex: 1;
    min-width: 0;
    height: 40px;
    fill: #a8a8a8;
}

.ruler .now {
    fill: #6c70b2;
}

.range {
    padding-left: 13px;
    gap: 12px;
}

.range-bar {
    flex: 1;
    display: flex;
    align-items: center;
    height: 26px;
    padding-left: 7px;
    gap: 8px;
    border-radius: 5px;
    background-color: #3d3d3d;
    color: #d0cdc4;
}

.range-bar i {
    width: 8px;
    height: 16px;
    background: repeating-linear-gradient(90deg, #555 0 1px, transparent 1px 3px);
}

/* right panels */
.panels {
    display: flex;
    flex-direction: column;
    min-width: 0;
    border-left: 2px solid #222;
}

.panel {
    min-height: 0;
    display: flex;
    flex-direction: column;
}

.objects {
    flex: 430;
}

.attributes {
    flex: 536;
    position: relative;
    border-top: 2px solid #1f1f1f;
}

.tabs {
    flex: none;
    height: 34px;
    display: flex;
    padding-top: 1px;
    background-color: #1c1c1c;
}

.tabs button {
    padding: 0 18px;
    margin-right: 1px;
    color: #636363;
}

.tabs .on {
    background-color: #2b2b2b;
    color: #d6d6d6;
}

.panel-menu {
    flex: none;
    height: 34px;
    display: flex;
    align-items: center;
    gap: 23px;
    padding: 0 6px 2px 9px;
}

.panel-menu .burger {
    margin-right: -9px;
}

.panel-icons {
    margin-left: auto;
    display: flex;
    gap: 8px;
    color: #8f8f8f;
}

.panel-icons svg {
    width: 22px;
    height: 22px;
}

.panel-icons .lit {
    color: #a8a8a8;
}

.panel-icons .dim {
    color: #4a4a4a;
}

.flip {
    transform: scaleX(-1);
}

.up {
    transform: rotate(90deg);
}

.tree {
    flex: 1;
    width: 74px;
    margin-top: 2px;
    border-right: 2px solid #222;
}

.project {
    display: flex;
    align-items: center;
    gap: 14px;
    height: 28px;
    margin: 7px 13px 8px 16px;
}

.drop {
    position: relative;
    margin-left: auto;
    width: 150px;
    height: 28px;
    border-radius: 14px 8px 8px 14px;
    background: linear-gradient(90deg, #3d3d3d 120px, #2f2f2f 120px 121px, #3d3d3d 121px);
}

.drop select {
    appearance: none;
    width: 100%;
    height: 28px;
    padding-left: 11px;
    color: #bcbcbc;
}

.drop::after {
    content: "";
    position: absolute;
    right: 10px;
    top: 11px;
    width: 11px;
    height: 7px;
    background-color: #b5b5b5;
    clip-path: polygon(0 0, 100% 0, 50% 100%);
    pointer-events: none;
}

.chips {
    display: flex;
    flex-wrap: wrap;
    gap: 6px 7px;
    padding: 0 60px 0 12px;
}

.chips button {
    display: flex;
    align-items: center;
    gap: 5px;
    height: 29px;
    padding: 0 14px;
    border-radius: 6px;
    background-color: #3d3d3d;
    color: #b2b2b2;
}

.chips svg {
    width: 12px;
    height: 14px;
}

.chips .on {
    background-color: #555a9c;
    color: #e6e6e6;
}

.thumb {
    width: 6px;
    flex: 1;
    margin: 6px 19px 20px auto;
    border-radius: 3px;
    background-color: #4a4a4a;
}

.statusbar {
    flex: none;
    height: 35px;
    display: flex;
    align-items: center;
    gap: 13px;
    padding: 2px 5px 0;
    background-color: #1c1c1c;
}

/* explorer window, floats over the workspace */
.explorer {
    position: absolute;
    left: 624px;
    right: 0;
    bottom: 28px;
    background-color: #fff;
    color: #1a1a1a;
    font-size: 17px;
    line-height: 24px;
    box-shadow: 0 0 0 1px #3a3a3a, 0 2px 10px rgba(0, 0, 0, 0.6);
}

.folder {
    width: 15px;
    height: 23px;
}

.ex-title {
    height: 44px;
    display: flex;
    align-items: center;
    padding-left: 14px;
    color: #999;
}

.ex-title i {
    width: 1px;
    height: 20px;
    margin: 0 7px 0 10px;
    background-color: #999;
}

.check {
    width: 18px;
    height: 23px;
    margin: 0 15px 0 12px;
}

.qa {
    width: 10px;
    height: 8px;
    margin: 4px 5px 0 15px;
}

.win-btns {
    margin-left: auto;
    display: flex;
    gap: 54px;
    padding-right: 20px;
}

.win-btns svg {
    width: 16px;
    height: 16px;
}

.ribbon {
    height: 35px;
    display: flex;
    align-items: center;
    border-bottom: 1px solid #dadada;
    font-size: 15px;
    color: #3b3b3b;
}

.ribbon button {
    margin-left: 41px;
}

.ribbon .file {
    align-self: stretch;
    width: 84px;
    margin: 0 -21px 0 0;
    background-color: #0066b4;
    color: #fff;
}

.expand {
    width: 16px;
    height: 11px;
    margin-left: auto;
    color: #999;
}

.ribbon .help {
    width: 22px;
    height: 22px;
    margin: 0 -2px 0 13px;
    border-radius: 50%;
    background-color: #0067c0;
    color: #fff;
    line-height: 22px;
}

.ex-nav {
    display: flex;
    align-items: center;
    padding: 5px 5px 10px 18px;
    color: #707070;
}

.ex-nav > button {
    margin-right: 26px;
}

.ex-nav > .off {
    color: #d0d0d0;
    margin-right: 19px;
}

.ex-nav > .recent {
    margin-right: 16px;
}

.ex-nav > button:nth-of-type(4) {
    margin-right: 9px;
}

.arr {
    width: 20px;
    height: 18px;
}

.address {
    flex: 467;
    height: 47px;
    display: flex;
    align-items: center;
    border: 1px solid #d9d9d9;
    padding-left: 5px;
}

.address a {
    color: #1a1a1a;
    text-decoration: none;
}

.laquo {
    margin: -4px 12px 0 15px;
    color: #444;
}

.sep {
    width: 12px;
    height: 9px;
    margin: 0 11px;
    transform: rotate(-90deg);
}

.drop-ico {
    width: 14px;
    height: 10px;
    margin-left: auto;
}

.address button {
    align-self: stretch;
    width: 48px;
    display: flex;
    align-items: center;
    justify-content: center;
    margin-left: 15px;
    border-left: 1px solid #d9d9d9;
}

.find {
    flex: 505;
    height: 47px;
    display: flex;
    align-items: center;
    gap: 21px;
    margin-left: 12px;
    padding-left: 21px;
    border: 1px solid #d9d9d9;
}

.find svg {
    width: 18px;
    height: 18px;
}

.find input {
    flex: 1;
    min-width: 0;
    outline: none;
}

.find input::placeholder {
    color: #6d6d6d;
    opacity: 1;
}

.ex-body {
    height: 177px;
    display: flex;
}

.places {
    list-style: none;
    width: 208px;
    margin: 0;
    padding: 12px 0 0;
    overflow: hidden;
}

.places li {
    display: flex;
    align-items: center;
    gap: 6px;
    height: 36px;
    padding-left: 49px;
}

.places .root {
    padding-left: 37px;
}

.places .on {
    background-color: #d9d9d9;
}

.places svg {
    width: 22px;
    height: 22px;
}

.vscroll {
    width: 26px;
    display: flex;
    flex-direction: column;
    align-items: center;
    justify-content: space-between;
    padding: 10px 0 8px;
    margin: 0 3px 0 1px;
    background-color: #eee;
    color: #555;
}

.vscroll svg,
.hscroll svg {
    width: 14px;
    height: 10px;
}

.vscroll span {
    width: 25px;
    height: 27px;
    margin-top: 6px;
    background-color: #cdcdcd;
}

.rot {
    transform: rotate(180deg);
}

.files {
    flex: 1;
    min-width: 0;
    display: flex;
    flex-direction: column;
    justify-content: space-between;
    border-left: 1px solid #eee;
}

.files table {
    width: 100%;
    table-layout: fixed;
    border-collapse: collapse;
    color: #6d6d6d;
}

.files th {
    position: relative;
    height: 41px;
    padding: 3px 0 0 9px;
    border-right: 1px solid #eee5e0;
    text-align: left;
    font-weight: 400;
    color: #4f6479;
}

.files .c-name {
    width: 460px;
    padding-left: 28px;
}

.files .c-date {
    width: 243px;
}

.c-name svg {
    position: absolute;
    left: 51%;
    top: 1px;
    width: 12px;
    height: 7px;
}

.files td {
    height: 52px;
    padding: 0 0 0 9px;
}

.files .name {
    display: flex;
    align-items: center;
    gap: 10px;
    padding-left: 31px;
    color: #1a1a1a;
}

.name svg {
    width: 17px;
    height: 22px;
}

.hscroll {
    display: flex;
    align-items: center;
    height: 25px;
    margin-left: 2px;
    padding: 0 1px 0 5px;
    background-color: #eee;
    color: #555;
}

.hscroll span {
    width: 83%;
    height: 24px;
    margin: 0 auto 0 7px;
    background-color: #cbcbcb;
}

.l {
    transform: rotate(90deg);
}

.r {
    transform: rotate(-90deg);
}

.ex-status {
    height: 35px;
    display: flex;
    align-items: center;
    padding: 0 6px 0 23px;
    color: #2f4357;
}

.ex-status span {
    padding-right: 15px;
    border-right: 1px solid #eee;
}

.details {
    margin-left: auto;
    width: 33px;
    height: 35px;
    display: flex;
    align-items: center;
    justify-content: center;
    border: 1px solid #26a0da;
    background-color: #cbe6f6;
}

.thumbs {
    margin-left: 6px;
}

.pointer {
    position: absolute;
    left: 1058px;
    top: 943px;
    width: 19px;
    height: 28px;
}
```
